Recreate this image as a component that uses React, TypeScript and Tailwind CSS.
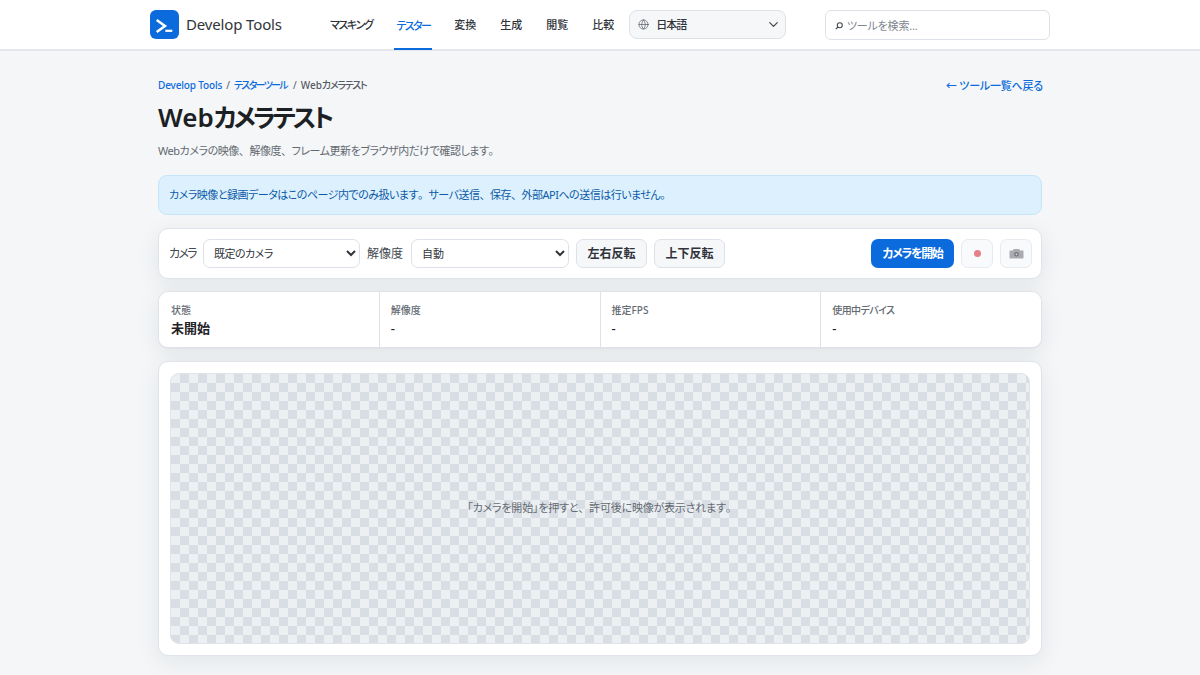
import { ChevronDown, Globe } from "lucide-react";

const navItems = [
  { label: "マスキング", tracking: "tracking-[-1.4px]" },
  { label: "テスター", tracking: "tracking-[-1.65px]", active: true },
  { label: "変換" },
  { label: "生成" },
  { label: "閲覧" },
  { label: "比較" },
];

const stats = [
  { label: "状態", value: "未開始", strong: true },
  { label: "解像度", value: "-" },
  { label: "推定FPS", value: "-" },
  { label: "使用中デバイス", value: "-", kana: true },
];

// full-width punctuation, palt would squeeze it
function Mark({ children }: { children: string }) {
  return <span className="[font-feature-settings:normal]">{children}</span>;
}

export default function App() {
  return (
    <div className="min-h-screen h-[675px] overflow-hidden bg-[#f4f6f8] text-[#1f2328] [font-feature-settings:'palt'] font-['Noto_Sans','Noto_Sans_CJK_JP',sans-serif]">
      {/* Header */}
      <header className="h-[51px] bg-white border-b-2 border-[#e3e6ec]">
        <div className="w-[900px] mx-auto flex items-center h-full">
          <div className="flex items-center gap-[7px] w-[178px]">
            <svg width="29" height="29" viewBox="0 0 29 29" fill="none">
              <rect width="29" height="29" rx="6" fill="#0b6bdc" />
              <path d="M6.7 10 L15 16 L6.7 22" stroke="white" strokeWidth="2.5" />
              <path d="M15.3 20.8 H22.3" stroke="white" strokeWidth="2.2" />
            </svg>
            <span className="text-[15px] tracking-[-0.15px] text-[#30343a]">Develop Tools</span>
          </div>
          <nav className="flex items-center h-full gap-[20px]">
            {navItems.map((item) => (
              <a
                key={item.label}
                href="#"
                className={
                  (item.active
                    ? "text-[#0b6bdc] border-b-2 border-[#0b6bdc] -mb-[2px] pt-[4px] "
                    : "text-[#30343a] pt-[2px] ") +
                  (item.tracking ? item.tracking + " " : "") +
                  "h-full flex items-center px-[2px] text-[11px] font-medium"
                }
              >
                {item.label}
              </a>
            ))}
          </nav>
          <div className="ml-[13px] w-[157px] h-[29px] rounded-[8px] border border-[#dde1e8] bg-[#f6f7f9] flex items-center pl-[8px] pr-[4px] text-[11px] font-medium text-[#30343a]">
            <Globe size={11} strokeWidth={1.5} className="text-[#555b64]" />
            <span className="ml-[7px] pt-[2px] tracking-[-1px]">日本語</span>
            <ChevronDown size={15} strokeWidth={2} className="ml-auto text-[#444a52]" />
          </div>
          <div className="ml-auto w-[225px] h-[30px] rounded-[6px] border border-[#dde1e8] bg-white flex items-center pl-[9px] text-[11px] text-[#80858d]">
            <svg width="8" height="8" viewBox="0 0 8 8" fill="none" stroke="#444a52" strokeWidth="1.1" className="mr-[4px] mt-[3px]">
              <circle cx="4.8" cy="3.2" r="2.5" />
              <path d="M3 5 L0.8 7.2" />
            </svg>
            <span className="pt-[3px] tracking-[-0.2px]">ツールを検索...</span>
          </div>
        </div>
      </header>

      <main className="w-[884px] mx-auto pt-[26px]">
        {/* Title block */}
        <div className="flex items-center justify-between h-[16px] text-[10px]">
          <div className="flex items-center gap-[4px]">
            <a href="#" className="text-[#0b6bdc] font-medium tracking-[-0.15px]">Develop Tools</a>
            <span className="text-[#555b64]">/</span>
            <a href="#" className="text-[#0b6bdc] font-medium tracking-[-1.7px]">テスターツール</a>
            <span className="ml-[2px] text-[#555b64]">/</span>
            <span className="text-[#555b64] font-medium">
              Web<span className="tracking-[-1.3px]">カメラテスト</span>
            </span>
          </div>
          <a href="#" className="-mr-px pt-[2px] text-[11px] font-medium tracking-[-0.2px] text-[#0b6bdc]">← ツール一覧へ戻る</a>
        </div>
        <h1 className="mt-[6px] text-[26px] leading-[36px] font-semibold text-[#1c1f23]">
          Web<span className="text-[25px] tracking-[-3.1px]">カメラテスト</span>
        </h1>
        <p className="mt-[7px] text-[11px] leading-[18px] tracking-[-0.45px] text-[#646a72]">
          Webカメラの映像<Mark>、</Mark>解像度<Mark>、</Mark>フレーム更新をブラウザ内だけで確認します<Mark>。</Mark>
        </p>

        {/* Notice */}
        <div className="mt-[15px] h-[40px] rounded-[9px] border border-[#c5e6f9] bg-[#dcf1fd] flex items-center px-[10px] text-[11px] tracking-[-0.5px] text-[#0d5aa8]">
          <span>
            カメラ映像と録画データはこのページ内でのみ扱います<Mark>。</Mark>サーバ送信<Mark>、</Mark>保存<Mark>、</Mark>外部APIへの送信は行いません<Mark>。</Mark>
          </span>
        </div>

        {/* Controls */}
        <div className="mt-[13px] h-[51px] rounded-[10px] border border-[#e0e3e9] bg-white shadow-[0_6px_24px_rgba(30,35,40,0.08)] flex items-center pl-[10px] pr-[9px] text-[12px]">
          <label className="tracking-[-1.7px] text-[#444a52]">カメラ</label>
          <select className="ml-[7px] w-[157px] h-[29px] rounded-[7px] border border-[#dde1e8] bg-white pl-[6px] text-[11px] tracking-[-0.5px] text-[#30343a]">
            <option>既定のカメラ</option>
          </select>
          <label className="ml-[7px] text-[#444a52]">解像度</label>
          <select className="ml-[8px] w-[158px] h-[29px] rounded-[7px] border border-[#dde1e8] bg-white pl-[6px] text-[11px] text-[#30343a]">
            <option>自動</option>
          </select>
          <button className="ml-[7px] w-[71px] h-[29px] rounded-[7px] border border-[#dde1e8] bg-[#f6f7f9] font-semibold text-[#30343a]">左右反転</button>
          <button className="ml-[7px] w-[71px] h-[29px] rounded-[7px] border border-[#dde1e8] bg-[#f6f7f9] font-semibold text-[#30343a]">上下反転</button>
          <button className="ml-auto w-[83px] h-[29px] rounded-[7px] bg-[#0b6bdc] font-semibold tracking-[-1.4px] text-white">カメラを開始</button>
          <button className="ml-[7px] w-[32px] h-[29px] rounded-[7px] border border-[#e8eaef] bg-[#f9fafc] flex items-center justify-center">
            <span className="w-[7px] h-[7px] rounded-full bg-[#e57f88]" />
          </button>
          <button className="ml-[7px] w-[32px] h-[29px] rounded-[7px] border border-[#e8eaef] bg-[#f9fafc] flex items-center justify-center">
            <svg width="15" height="11" viewBox="0 0 15 11">
              <path d="M1 2.5h3l.6-1.5h5.8l.6 1.5h3a.5.5 0 0 1 .5.5v7a.5.5 0 0 1-.5.5H1a.5.5 0 0 1-.5-.5V3a.5.5 0 0 1 .5-.5z" fill="#a9abb1" />
              <circle cx="7.5" cy="6.3" r="2.3" fill="#6f7177" />
              <circle cx="7.5" cy="6.3" r="1.1" fill="#c9cacd" />
            </svg>
          </button>
        </div>

        {/* Stats */}
        <div className="mt-[12px] h-[58px] rounded-[10px] border border-[#e0e3e9] border-b-2 bg-white shadow-[0_6px_24px_rgba(30,35,40,0.08)] flex">
          {stats.map((stat, i) => (
            <div
              key={stat.label}
              className={i > 0 ? "w-[221px] border-l border-[#dfe2e8] pl-[11px] pt-[11px]" : "w-[220px] pl-[12px] pt-[11px]"}
            >
              <div className={stat.kana ? "text-[10px] leading-[14px] font-medium tracking-[-0.6px] text-[#646a72]" : "text-[10px] leading-[14px] font-medium text-[#646a72]"}>
                {stat.label}
              </div>
              <div className={stat.strong ? "mt-[2px] text-[13px] leading-[19px] font-bold text-[#1f2328]" : "mt-[2px] text-[13px] leading-[19px] font-medium text-[#1f2328]"}>
                {stat.value}
              </div>
            </div>
          ))}
        </div>

        {/* Video */}
        <div className="mt-[12px] h-[295px] rounded-[10px] border border-[#e0e3e9] bg-white shadow-[0_6px_24px_rgba(30,35,40,0.08)] p-[11px]">
          <div className="h-full rounded-[9px] border border-[#dfe3ea] bg-[repeating-conic-gradient(#d9dee5_0_25%,#ecf0f3_0_50%)] bg-[length:18px_18px] flex items-center justify-center text-[11px] tracking-[-0.2px] text-[#646a72]">
            <span className="pl-[4px]">
              「カメラを開始」を押すと<Mark>、</Mark>許可後に映像が表示されます<Mark>。</Mark>
            </span>
          </div>
        </div>
      </main>
    </div>
  );
}
